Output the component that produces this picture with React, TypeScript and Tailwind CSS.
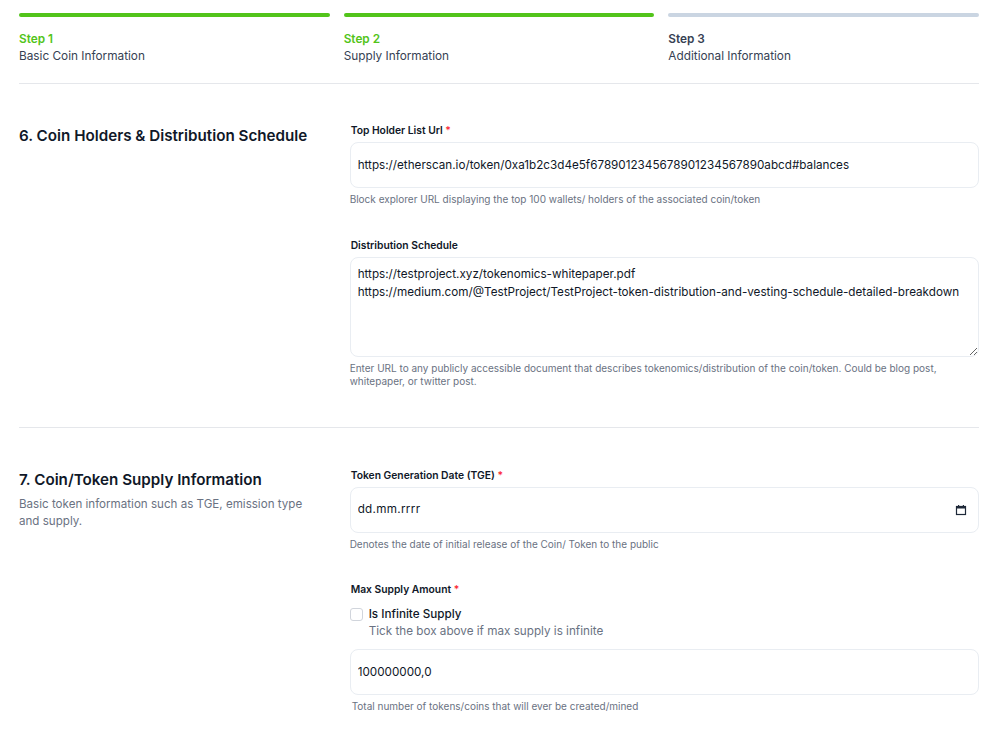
import React from 'react';

const steps = [
  { n: 'Step 1', label: 'Basic Coin Information', done: true },
  { n: 'Step 2', label: 'Supply Information', done: true },
  { n: 'Step 3', label: 'Additional Information', done: false },
];

function Label({ text, required }: { text: string; required?: boolean }) {
  return (
    <label className="block text-[10.3px] leading-[14px] font-semibold text-gray-900 pl-px mb-[5px]">
      {text}
      {required && <span className="text-red-500"> *</span>}
    </label>
  );
}

function Help({ children, className = '' }: { children: React.ReactNode; className?: string }) {
  return <p className={`text-[10px] leading-[13px] text-gray-500 mt-[5px] ${className}`}>{children}</p>;
}

function TextInput({ value }: { value: string }) {
  return (
    <input
      readOnly
      defaultValue={value}
      className="block w-full h-[46px] px-[7px] rounded-lg border border-[#e9edf2] bg-white text-[11.7px] text-gray-900 outline-none"
    />
  );
}

export default function App() {
  return (
    <div className="min-h-screen bg-white font-['Inter',sans-serif]">
      <div className="w-[960px] ml-[19px] pt-[13px]">
        <div className="grid grid-cols-3 gap-[14px] border-b border-gray-200 pb-[18px]">
          {steps.map((s) => (
            <div key={s.n}>
              <div className={`h-1 rounded-full ${s.done ? 'bg-[#52c41a]' : 'bg-slate-300'}`} />
              <div className="mt-[14px] text-[11.8px] leading-[17px]">
                <div className={`font-semibold ${s.done ? 'text-[#52c41a]' : 'text-gray-700'}`}>{s.n}</div>
                <div className="text-gray-700">{s.label}</div>
              </div>
            </div>
          ))}
        </div>

        <section className="grid grid-cols-3 gap-x-8 pt-[39px] pb-[39px] border-b border-gray-200">
          <div>
            <h2 className="mt-[2px] text-[15.2px] leading-[22px] font-semibold text-gray-900">
              6. Coin Holders &amp; Distribution Schedule
            </h2>
          </div>
          <div className="col-span-2">
            <Label text="Top Holder List Url" required />
            <TextInput value="https://etherscan.io/token/0xa1b2c3d4e5f6789012345678901234567890abcd#balances" />
            <Help>Block explorer URL displaying the top 100 wallets/ holders of the associated coin/token</Help>

            <div className="mt-8">
              <Label text="Distribution Schedule" />
              <textarea
                readOnly
                defaultValue={
                  'https://testproject.xyz/tokenomics-whitepaper.pdf\nhttps://medium.com/@TestProject/TestProject-token-distribution-and-vesting-schedule-detailed-breakdown'
                }
                className="block w-full h-[100px] px-[7px] py-[7px] rounded-lg border border-[#e9edf2] bg-white text-[11.7px] leading-[18px] text-gray-900 outline-none"
              />
              <Help>
                Enter URL to any publicly accessible document that describes tokenomics/distribution of the coin/token. Could be blog post, whitepaper, or twitter post.
              </Help>
            </div>
          </div>
        </section>

        <section className="grid grid-cols-3 gap-x-8 pt-10 pb-10">
          <div>
            <h2 className="mt-px text-[15.2px] leading-[22px] font-semibold text-gray-900">
              7. Coin/Token Supply Information
            </h2>
            <p className="mt-[5px] text-[11.6px] leading-[17px] text-gray-500">
              Basic token information such as TGE, emission type and supply.
            </p>
          </div>
          <div className="col-span-2">
            <Label text="Token Generation Date (TGE)" required />
            <div className="flex items-center h-[46px] px-[7px] rounded-lg border border-[#e9edf2] bg-white">
              <input
                readOnly
                placeholder="dd.mm.rrrr"
                className="flex-1 text-[11.7px] tracking-[0.3px] text-gray-900 placeholder:text-gray-900 outline-none"
              />
              <svg width="12" height="12" viewBox="0 0 12 12" className="mr-1 text-gray-800">
                <rect x="1.5" y="2.5" width="9" height="8" fill="none" stroke="currentColor" strokeWidth="1.2" />
                <rect x="1.5" y="2.5" width="9" height="2" fill="currentColor" />
                <rect x="3" y="1" width="1.2" height="2" fill="currentColor" />
                <rect x="7.8" y="1" width="1.2" height="2" fill="currentColor" />
              </svg>
            </div>
            <Help>Denotes the date of initial release of the Coin/ Token to the public</Help>

            <div className="mt-[31px]">
              <Label text="Max Supply Amount" required />
              <div className="flex items-start gap-[6px] mt-[10px]">
                <span className="mt-[2px] w-[13px] h-[13px] rounded-[3px] border border-gray-300 bg-white shrink-0" />
                <div className="text-[11.7px] leading-[17px]">
                  <div className="font-medium text-gray-900">Is Infinite Supply</div>
                  <div className="text-gray-500">Tick the box above if max supply is infinite</div>
                </div>
              </div>
              <div className="mt-[9px]">
                <TextInput value="100000000,0" />
              </div>
              <Help className="pl-[2px]">Total number of tokens/coins that will ever be created/mined</Help>
            </div>
          </div>
        </section>
      </div>
    </div>
  );
}
